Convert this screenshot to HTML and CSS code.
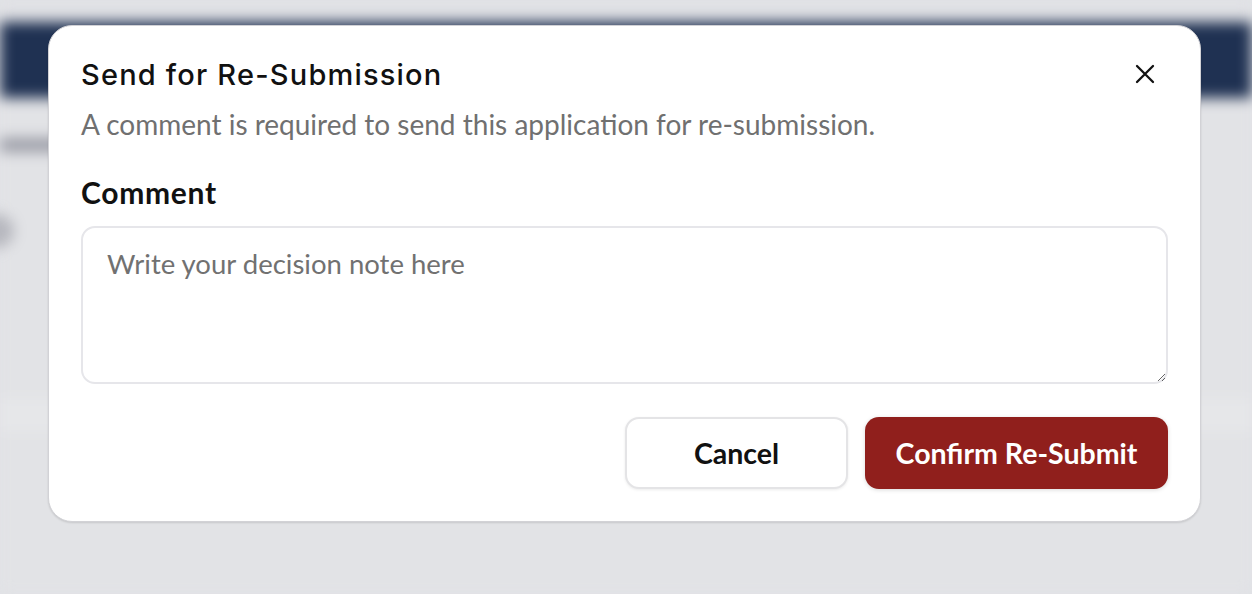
FILE: index.html
```html
<!DOCTYPE html>
<html lang="en">
<head>
<meta charset="utf-8">
<title>Send for Re-Submission</title>
<link rel="stylesheet" href="styles.css">
</head>
<body>
<div class="page">
  <div class="topstrip"></div>
  <header class="appbar"></header>
  <div class="content">
    <div class="crumb"></div>
    <div class="avatar"></div>
    <div class="band"></div>
  </div>
</div>

<div class="overlay">
  <div class="modal" role="dialog" aria-labelledby="mtitle">
    <div class="modal-head">
      <h2 id="mtitle" class="modal-title">Send for Re-Submission</h2>
      <button class="close-btn" aria-label="Close">
        <svg width="22" height="22" viewBox="0 0 22 22" fill="none" stroke="#111" stroke-width="2.3" stroke-linecap="round">
          <path d="M3 3 L19 19 M19 3 L3 19"/>
        </svg>
      </button>
    </div>
    <p class="modal-sub">A comment is required to send this application for re-submission.</p>
    <label class="field-label" for="comment">Comment</label>
    <textarea id="comment" class="comment-box" placeholder="Write your decision note here"></textarea>
    <div class="actions">
      <button class="btn btn-cancel">Cancel</button>
      <button class="btn btn-confirm">Confirm Re-Submit</button>
    </div>
  </div>
</div>
</body>
</html>
```

FILE: styles.css
```css
html, body {
  margin: 0;
  padding: 0;
}
body {
  width: 1252px;
  height: 594px;
  overflow: hidden;
  background: #e1e2e6;
  font-family: "Lato", "Noto Sans", sans-serif;
  position: relative;
}

/* blurred page behind the dialog */
.page {
  filter: blur(7px);
  height: 594px;
  display: flex;
  flex-direction: column;
}
.topstrip {
  height: 22px;
  background: #e0e1e5;
}
.appbar {
  height: 76px;
  background: #1f3152;
}
.content {
  flex: 1;
  background: #e2e3e6;
  display: flex;
  flex-direction: column;
  padding-top: 40px;
}
.crumb {
  width: 120px;
  height: 14px;
  background: #9a9ca6;
}
.avatar {
  width: 34px;
  height: 34px;
  border-radius: 50%;
  background: #b6b7be;
  margin: 62px 0 0 -20px;
}
.band {
  height: 34px;
  margin-top: 150px;
  background: #e6e7e9;
}

.overlay {
  position: absolute;
  inset: 0;
  display: flex;
  justify-content: flex-start;
  align-items: flex-start;
  padding: 25px 0 0 48px;
}

.modal {
  width: 1087px;
  flex: none;
  background: #fff;
  border: 1px solid #d2d2d6;
  border-radius: 24px;
  padding: 30px 32px 32px 32px;
  box-shadow: 0 1px 2px rgba(0,0,0,0.12);
  display: flex;
  flex-direction: column;
}

.modal-head {
  display: flex;
  align-items: center;
  justify-content: space-between;
  height: 36px;
}
.modal-title {
  margin: 0;
  font-family: "Inter", "Liberation Sans", sans-serif;
  font-weight: 500;
  font-size: 29px;
  color: #111;
  letter-spacing: 1.2px;
}
.close-btn {
  background: none;
  border: 0;
  padding: 0;
  width: 22px;
  height: 22px;
  margin-right: 12px;
  cursor: pointer;
  display: flex;
}

.modal-sub {
  margin: 15px 0 0;
  font-size: 28px;
  color: #707070;
  line-height: 34px;
}

.field-label {
  margin-top: 34px;
  font-size: 30px;
  font-weight: 700;
  color: #111;
  line-height: 34px;
  letter-spacing: 0.7px;
}

.comment-box {
  margin-top: 17px;
  height: 158px;
  box-sizing: border-box;
  border: 2px solid #e6e6ea;
  border-radius: 14px;
  padding: 19px 24px;
  font-family: "Lato", "Noto Sans", sans-serif;
  font-size: 27.5px;
  color: #222;
  outline: none;
  resize: vertical;
}
.comment-box::placeholder {
  color: #717171;
}

.actions {
  margin-top: 33px;
  display: flex;
  justify-content: flex-end;
  gap: 17px;
}
.btn {
  height: 72px;
  border-radius: 14px;
  font-family: "Lato", "Noto Sans", sans-serif;
  font-size: 28.5px;
  font-weight: 700;
  cursor: pointer;
}
.btn-cancel {
  width: 223px;
  background: #fff;
  color: #111;
  border: 2px solid #e4e4e6;
  box-shadow: 0 1px 3px rgba(0,0,0,0.08);
}
.btn-confirm {
  width: 303px;
  background: #901f1c;
  color: #fff;
  border: 0;
  box-shadow: 0 1px 4px rgba(0,0,0,0.15);
}
```
